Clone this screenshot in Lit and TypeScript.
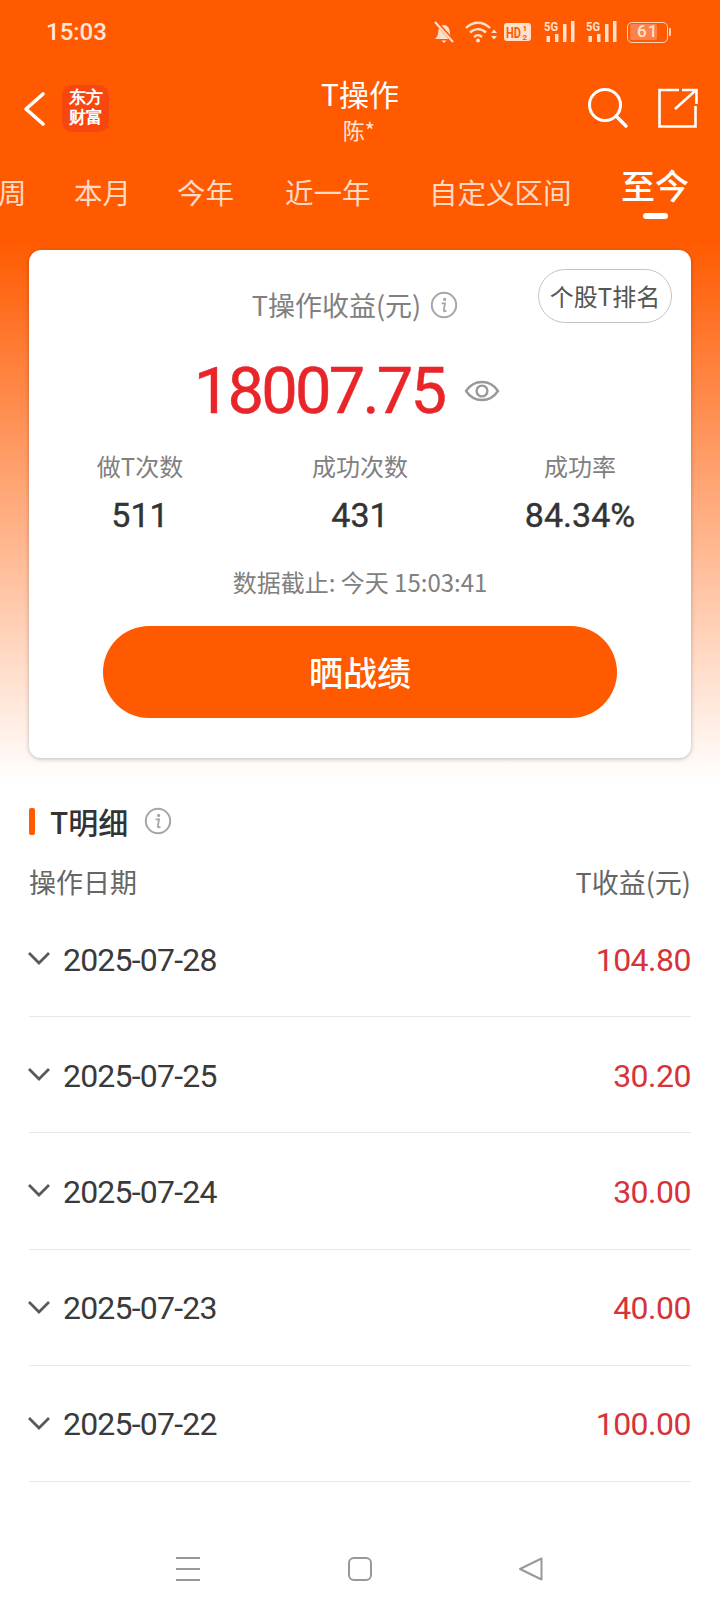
import { LitElement, css, html, svg } from 'lit';
import { customElement } from 'lit/decorators.js';

const tabs = [
    { label: '本月', width: 103 },
    { label: '今年', width: 108 },
    { label: '近一年', width: 144 },
    { label: '自定义区间', width: 192 },
];
const rows = [
    { date: '2025-07-28', value: '104.80' },
    { date: '2025-07-25', value: '30.20' },
    { date: '2025-07-24', value: '30.00' },
    { date: '2025-07-23', value: '40.00' },
    { date: '2025-07-22', value: '100.00' },
];
const stats = [
    { label: '做T次数', value: '511' },
    { label: '成功次数', value: '431' },
    { label: '成功率', value: '84.34%' },
];

const infoIcon = html`<svg class="info" viewBox="0 0 28 28">
    <circle cx="14" cy="14" r="12.2" fill="none" stroke="#a6a6a6" stroke-width="2"></circle>
    <circle cx="14.6" cy="8.4" r="1.6" fill="#a6a6a6"></circle>
    <path d="M12.4 12.4h2.6l-1.2 7.2c0 .8.8 1 2 .4" fill="none" stroke="#a6a6a6" stroke-width="1.8" stroke-linecap="round"></path>
</svg>`;

const signal = (x: number) => svg`
    <text x="${x}" y="11" font-size="13" font-weight="700" font-family="Roboto, sans-serif" fill="#ffe0cc" textLength="14" lengthAdjust="spacingAndGlyphs">5G</text>
    <rect x="${x + 2.5}" y="16" width="3.500" height="6" fill="#ffe0cc"></rect>
    <rect x="${x + 11}" y="14" width="3.500" height="8" fill="#ffe0cc"></rect>
    <rect x="${x + 19}" y="4" width="3.500" height="18" fill="#ffe0cc"></rect>
    <rect x="${x + 27}" y="1" width="3.500" height="21" fill="#ffe0cc"></rect>
`;

@customElement('app-root')
export class AppRoot extends LitElement {
    render() {
        return html`
            <div class="top">
                <div class="status">
                    <span class="time">15:03</span>
                    <svg class="status-icons" viewBox="0 0 194 24">
                        <path d="M2 19h18c-2-2-3-3.500-3.200-7-.2-4-2.500-7-5.800-7s-5.600 3-5.800 7C5 15.500 4 17 2 19z" fill="#ffe0cc"></path>
                        <path d="M8.500 20.500h5l-2.500 2.500z" fill="#ffe0cc"></path>
                        <path d="M2 1l18 20" stroke="#ff5a00" stroke-width="4"></path>
                        <path d="M2 2l18 20" stroke="#ffe0cc" stroke-width="2"></path>
                        <path d="M33 8c7-7 17-7 24 0M37 12.500c5-4.500 11-4.500 16 0M41 17c3-2.500 5-2.500 8 0" fill="none" stroke="#ffe0cc" stroke-width="2.400"></path>
                        <circle cx="45" cy="20.500" r="2" fill="#ffe0cc"></circle>
                        <path d="M58 13h6l-3-3.500zM58 16h6l-3 3.500z" fill="#ffe0cc"></path>
                        <rect x="71" y="3" width="27" height="18" rx="3" fill="#ffe0cc"></rect>
                        <text x="73" y="17.500" font-size="14" font-weight="700" font-family="Roboto, sans-serif" fill="#ff5a00" textLength="15" lengthAdjust="spacingAndGlyphs">HD</text>
                        <text x="89.500" y="11" font-size="8" font-weight="700" font-family="Roboto, sans-serif" fill="#ff5a00">1</text>
                        <text x="89.500" y="20" font-size="8" font-weight="700" font-family="Roboto, sans-serif" fill="#ff5a00">2</text>
                        ${signal(111)}
                        ${signal(153)}
                    </svg>
                    <span class="battery"><span class="level"></span><span class="pct">61</span></span>
                    <span class="cap"></span>
                </div>
                <div class="nav">
                    <svg class="back" viewBox="0 0 24 36">
                        <path d="M21 3L4 18l17 15" fill="none" stroke="#fff" stroke-width="3.600" stroke-linecap="round" stroke-linejoin="round"></path>
                    </svg>
                    <div class="logo"><span>东方</span><span>财富</span></div>
                    <div class="title"><div class="main">T操作</div><div class="sub">陈*</div></div>
                    <svg class="search" viewBox="0 0 42 42">
                        <circle cx="18" cy="18" r="15.500" fill="none" stroke="#fff" stroke-width="3"></circle>
                        <path d="M29 29l10 10" stroke="#fff" stroke-width="3.400" stroke-linecap="round"></path>
                    </svg>
                    <svg class="share" viewBox="0 0 40 40">
                        <path d="M21 2H1.500v36.500h36V18" fill="none" stroke="#fff" stroke-width="2.600"></path>
                        <path d="M17 21L37 3M24 2h14.500v14" fill="none" stroke="#fff" stroke-width="2.600"></path>
                    </svg>
                </div>
                <div class="tabs">
                    <span class="tab first">周</span>
                    ${tabs.map((t) => html`<span class="tab" style="width:${t.width}px">${t.label}</span>`)}
                    <span class="tab active">至今<i></i></span>
                </div>
            </div>
            <div class="band">
                <div class="card">
                    <span class="rank">个股T排名</span>
                    <div class="head">T操作收益(元) ${infoIcon}</div>
                    <div class="amount">
                        <span>18007.75</span>
                        <svg class="eye" viewBox="0 0 36 28">
                            <path d="M2 14C10 2 26 2 34 14C26 26 10 26 2 14z" fill="none" stroke="#999" stroke-width="2.400" stroke-linejoin="round"></path>
                            <circle cx="18" cy="14" r="5.400" fill="none" stroke="#999" stroke-width="2.400"></circle>
                        </svg>
                    </div>
                    <div class="stats">
                        ${stats.map(
                            (s) => html`<div class="stat">
                                <div class="label">${s.label}</div>
                                <div class="num">${s.value}</div>
                            </div>`
                        )}
                    </div>
                    <div class="updated">数据截止: 今天 15:03:41</div>
                    <div class="cta">晒战绩</div>
                </div>
            </div>
            <div class="detail">
                <div class="section"><i></i><span>T明细</span>${infoIcon}</div>
                <div class="cols"><span>操作日期</span><span>T收益(元)</span></div>
                ${rows.map(
                    (r) => html`<div class="row">
                        <svg class="chev" viewBox="0 0 24 14">
                            <path d="M2 2l10 10L22 2" fill="none" stroke="#595959" stroke-width="2.800"></path>
                        </svg>
                        <span class="date">${r.date}</span>
                        <span class="val">${r.value}</span>
                    </div>`
                )}
            </div>
            <div class="softkeys">
                <svg width="26" height="26" viewBox="0 0 26 26">
                    <path d="M1 2h24M1 13h24M1 24h24" stroke="#999" stroke-width="2"></path>
                </svg>
                <svg width="26" height="26" viewBox="0 0 26 26">
                    <rect x="2" y="2" width="22" height="22" rx="5" fill="none" stroke="#999" stroke-width="2"></rect>
                </svg>
                <svg width="26" height="26" viewBox="0 0 26 26">
                    <path d="M23.500 2.500v21L2 13z" fill="none" stroke="#999" stroke-width="2" stroke-linejoin="round"></path>
                </svg>
            </div>
        `;
    }

    static styles = css`
        :host {
            display: block;
            position: relative;
            width: 720px;
            height: 1612px;
            background: #fff;
            overflow: hidden;
            font-family: 'Noto Sans CJK SC', Roboto, sans-serif;
            color: #333;
        }
        .top {
            background: #ff5a00;
            height: 240px;
            display: flex;
            flex-direction: column;
        }
        .status {
            display: flex;
            align-items: center;
            height: 64px;
            padding-left: 46px;
            color: #ffe6d6;
        }
        .time {
            font: 500 24px Roboto, sans-serif;
            width: 387px;
        }
        .status-icons {
            width: 194px;
            height: 24px;
            flex: none;
        }
        .battery {
            position: relative;
            flex: none;
            width: 41px;
            height: 21px;
            border: 1.5px solid #ffcfb3;
            border-radius: 5px;
            box-sizing: border-box;
        }
        .level {
            position: absolute;
            left: 1.500px;
            top: 1.500px;
            bottom: 1.500px;
            width: 27px;
            background: #ff8048;
            border-radius: 2px;
        }
        .pct {
            position: absolute;
            left: 9px;
            top: -2px;
            font: 500 17px Roboto, sans-serif;
            color: #ffe6d6;
            letter-spacing: 1px;
        }
        .cap {
            flex: none;
            width: 2px;
            height: 8px;
            margin-left: 1px;
            background: #ffcfb3;
        }
        .nav {
            display: flex;
            align-items: center;
            height: 92px;
            box-sizing: border-box;
            padding: 0 22px 4px;
            position: relative;
        }
        .back {
            width: 24px;
            height: 36px;
            margin-top: 2px;
        }
        .logo {
            width: 47px;
            height: 47px;
            margin-left: 16px;
            border-radius: 10px;
            background: #f8460f;
            color: #fff;
            font: 700 17px/20px 'Liberation Serif', serif;
            display: flex;
            flex-direction: column;
            align-items: center;
            justify-content: center;
        }
        .title {
            position: absolute;
            left: 0;
            right: 0;
            top: 9px;
            text-align: center;
            color: #fff;
        }
        .main {
            font-size: 30px;
            line-height: 40px;
        }
        .sub {
            font-size: 22px;
            line-height: 32px;
            color: #ffe6d6;
            margin-right: 2px;
        }
        .search {
            width: 42px;
            height: 42px;
            margin-left: auto;
        }
        .share {
            width: 40px;
            height: 40px;
            margin-left: 29px;
        }
        .tabs {
            display: flex;
            align-items: center;
            height: 72px;
            white-space: nowrap;
            color: #ffd9c2;
            font-size: 28.500px;
        }
        .tab {
            flex: none;
            line-height: 40px;
        }
        .first {
            width: 76px;
            margin-left: -2px;
        }
        .active {
            position: relative;
            color: #fff;
            font-size: 34px;
            font-weight: 500;
            top: -7px;
            margin-left: 0;
        }
        .active i {
            position: absolute;
            left: 22px;
            bottom: -14px;
            width: 25px;
            height: 6px;
            border-radius: 3px;
            background: #fff;
        }
        .band {
            height: 540px;
            padding: 10px 29px 0;
            box-sizing: border-box;
            background: linear-gradient(#ff5a00, #fff);
        }
        .card {
            position: relative;
            height: 508px;
            background: #fff;
            border-radius: 12px;
            box-shadow: 0 1px 4px rgba(0, 0, 0, 0.25);
            display: flex;
            flex-direction: column;
            align-items: center;
        }
        .rank {
            position: absolute;
            top: 19px;
            right: 19px;
            width: 134px;
            height: 54px;
            box-sizing: border-box;
            border: 1px solid #c4c4c4;
            border-radius: 27px;
            text-align: center;
            font-size: 24px;
            line-height: 52px;
            color: #555;
        }
        .head {
            display: flex;
            align-items: center;
            gap: 9px;
            margin-top: 33px;
            margin-right: 10px;
            font-size: 27px;
            line-height: 44px;
            color: #808080;
        }
        .info {
            width: 28px;
            height: 28px;
        }
        .amount {
            display: flex;
            align-items: center;
            gap: 20px;
            margin-top: 19px;
            margin-right: 26px;
            font: 400 65px/90px Roboto, sans-serif;
            letter-spacing: -2.800px;
            -webkit-text-stroke: 0.5px #e8262a;
            color: #e8262a;
        }
        .eye {
            width: 36px;
            height: 28px;
        }
        .stats {
            display: grid;
            grid-template-columns: repeat(3, 220px);
            margin-top: 12px;
            text-align: center;
        }
        .label {
            font-size: 24px;
            line-height: 36px;
            color: #808080;
        }
        .num {
            font: 400 34px/48px Roboto, sans-serif;
            -webkit-text-stroke: 0.4px #333;
            color: #333;
            margin-top: 7px;
        }
        .updated {
            margin-top: 25px;
            font-size: 24px;
            line-height: 36px;
            color: #808080;
        }
        .cta {
            width: 514px;
            height: 92px;
            margin-top: 26px;
            border-radius: 46px;
            background: #ff5a00;
            color: #fff;
            text-align: center;
            font-size: 34px;
            font-weight: 500;
            line-height: 92px;
        }
        .detail {
            padding: 19px 29px 0;
        }
        .section {
            display: flex;
            align-items: center;
            height: 44px;
            font-size: 30px;
            font-weight: 500;
            color: #333;
        }
        .section i {
            width: 6px;
            height: 27px;
            border-radius: 2px;
            background: #ff5a00;
            margin-right: 15px;
        }
        .section .info {
            margin-left: 16px;
        }
        .cols {
            display: flex;
            justify-content: space-between;
            margin-top: 20px;
            font-size: 27px;
            line-height: 38px;
            color: #666;
        }
        .row {
            display: flex;
            align-items: center;
            height: 116.200px;
            box-sizing: border-box;
            border-bottom: 1px solid #e8e8e8;
            padding-top: 2px;
        }
        .chev {
            width: 24px;
            height: 14px;
            margin-left: -2px;
            margin-top: -3px;
        }
        .date {
            margin-left: 12px;
            font: 400 32px Roboto, sans-serif;
            letter-spacing: -0.800px;
            color: #3a3a3a;
        }
        .val {
            margin-left: auto;
            font: 400 32px Roboto, sans-serif;
            letter-spacing: -0.500px;
            color: #d6333a;
        }
        .softkeys {
            position: absolute;
            top: 1556px;
            left: 175px;
            width: 369px;
            display: flex;
            justify-content: space-between;
        }
    `;
}
